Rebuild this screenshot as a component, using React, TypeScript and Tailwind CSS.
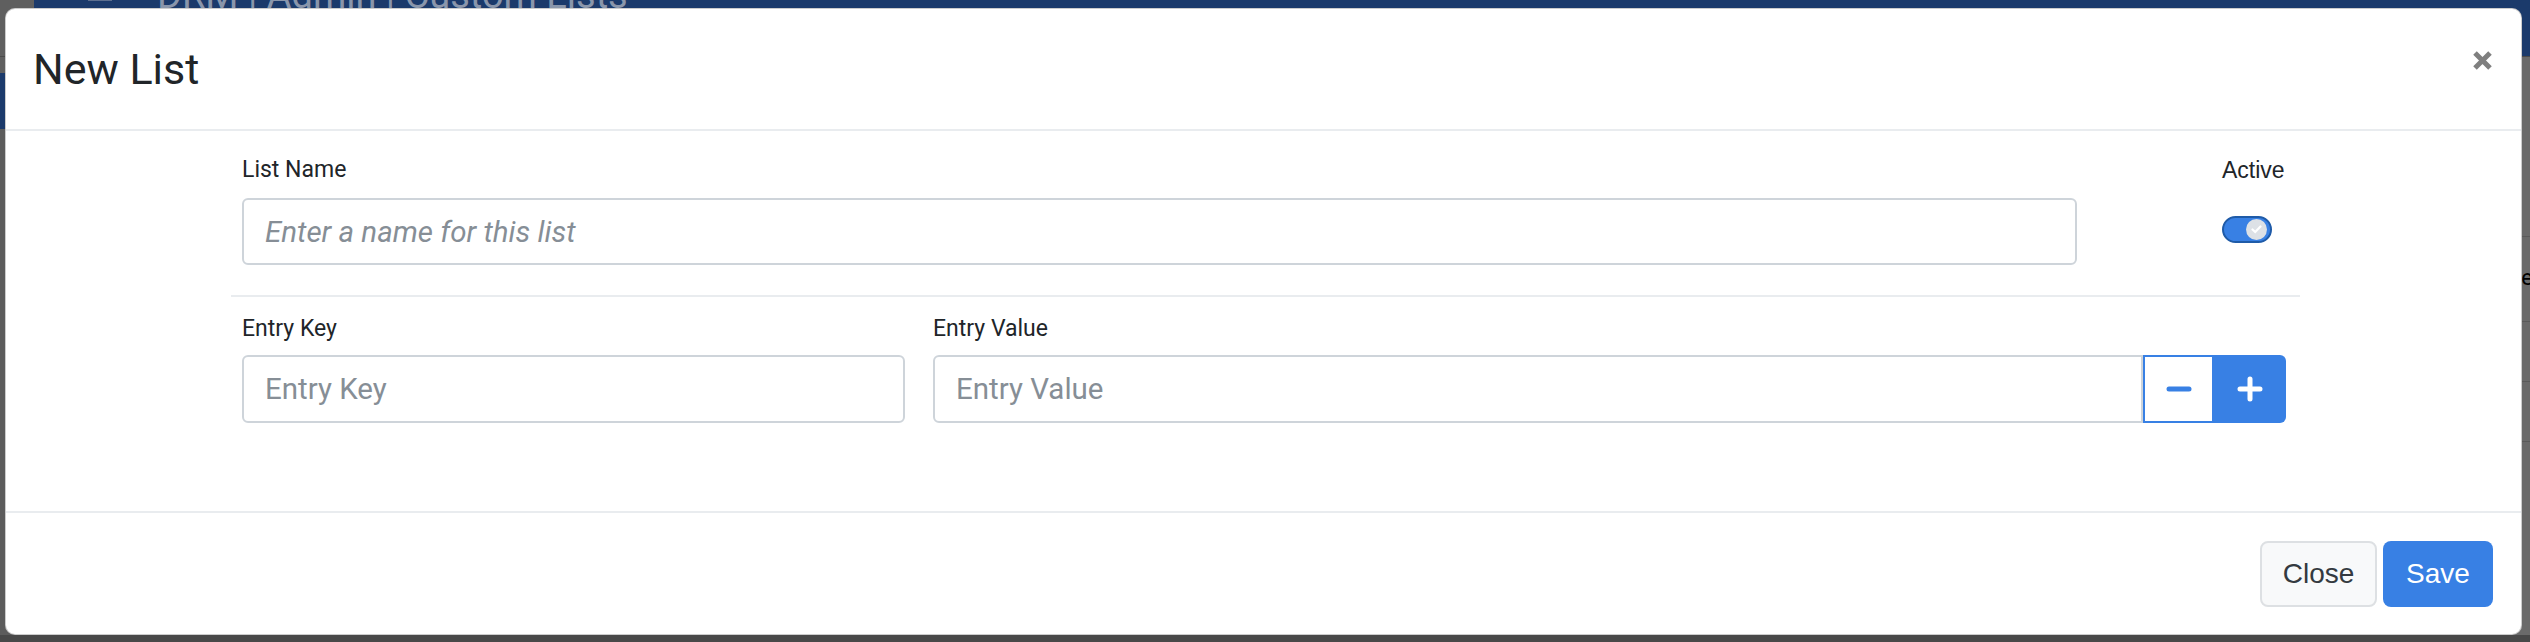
import { useState } from 'react';

const blue = 'bg-[#3880e4]';

export default function App() {
  const [active, setActive] = useState(true);
  const [entries] = useState([{ key: '', value: '' }]);

  return (
    <div className="relative w-[2530px] h-[642px] overflow-hidden bg-[#676767] font-['Roboto',sans-serif]">
      {/* page behind the backdrop */}
      <div className="flex flex-col h-full">
        <div className="flex h-[57px] border-b border-[#4a4a4a]">
          <div className="w-[34px] bg-[#5f5f5f]" />
          <div className="flex-1 flex items-start bg-[#1b3a6b]">
            <div className="ml-[54px] mt-[-10px] flex flex-col gap-[5px]">
              <div className="w-[24px] h-[3px] bg-[#5d6f8f]" />
              <div className="w-[24px] h-[3px] bg-[#5d6f8f]" />
            </div>
            <span className="ml-[45px] mt-[-24px] text-[38px] leading-none text-[#8a96ab] whitespace-nowrap">
              DRM | Admin | Custom Lists
            </span>
          </div>
        </div>
        <div className="flex flex-1">
          <div className="w-[34px] flex flex-col">
            <div className="h-[16px] bg-[#5f5f5f]" />
            <div className="h-[56px] bg-[#1b3a6b]" />
            <div className="flex-1 bg-[#5c5c5c]" />
          </div>
          <div className="flex-1 flex flex-col bg-[#6a6a6a]">
            <div className="h-[180px] border-b border-[#5a5a5a]" />
            <div className="h-[85px] flex justify-end items-start pt-[24px] text-[22px] text-black border-b border-[#5a5a5a]">
              <span className="mr-[-3px]">e</span>
            </div>
            <div className="h-[60px] border-b border-[#5a5a5a]" />
            <div className="h-[60px] border-b border-[#5a5a5a]" />
          </div>
        </div>
        <div className="h-[7px] bg-[#484848]" />
      </div>

      {/* modal */}
      <div className="absolute left-[5px] top-[8px] w-[2517px] h-[627px] flex flex-col bg-white rounded-[10px] border border-black/20">
        <div className="flex items-center justify-between h-[122px] pl-[27px] pr-[28px] border-b-2 border-[#e9ecef]">
          <h5 className="text-[43px] leading-none text-[#212529]">New List</h5>
          <button className="mb-[17px] w-[21px] h-[21px]">
            <svg width="21" height="21" viewBox="0 0 21 21">
              <path d="M3 3L18 18M18 3L3 18" stroke="#7f7f7f" strokeWidth="5" />
            </svg>
          </button>
        </div>

        <div className="flex-1 pt-[22px]">
          <div className="ml-[225px] w-[2069px]">
            <div className="flex pl-[11px] pr-[14px]">
              <div className="flex-1 flex flex-col">
                <label className="h-[34px] leading-[34px] mb-[11px] text-[23px] text-[#212529]">List Name</label>
                <input
                  placeholder="Enter a name for this list"
                  className="h-[67px] px-[21px] border-2 border-[#ced4da] rounded-[6px] text-[29.5px] outline-none placeholder:italic placeholder:text-[#868e96]"
                />
              </div>
              <div className="ml-[145px] w-[64px] flex flex-col">
                <label className="h-[34px] leading-[34px] text-[23px] text-[#212529] font-['Liberation_Sans',Arial,sans-serif] whitespace-nowrap">
                  Active
                </label>
                <button
                  onClick={() => setActive(!active)}
                  className={`mt-[29px] w-[50px] h-[27px] rounded-full border-2 border-[#1f5ba8] flex items-center pr-[3px] ${
                    active ? 'bg-[#3880e4] justify-end' : 'bg-white justify-start'
                  }`}
                >
                  <span className="w-[21px] h-[21px] rounded-full bg-[#dde1e6] flex items-center justify-center">
                    <svg width="11" height="9" viewBox="0 0 11 9">
                      <path d="M1.5 4.5L4.2 7L9.5 1.5" fill="none" stroke="white" strokeWidth="2.2" strokeLinecap="round" />
                    </svg>
                  </span>
                </button>
              </div>
            </div>

            <div className="mt-[30px] h-[2px] bg-[#e9ecef]" />

            {entries.map((entry, i) => (
              <div key={i} className="flex pl-[11px] pr-[14px] mt-[15px]">
                <div className="w-[663px] flex flex-col">
                  <label className="h-[34px] leading-[34px] mb-[9px] text-[23px] text-[#212529]">Entry Key</label>
                  <input
                    placeholder="Entry Key"
                    defaultValue={entry.key}
                    className="h-[68px] px-[21px] border-2 border-[#ced4da] rounded-[6px] text-[29.5px] outline-none placeholder:text-[#868e96]"
                  />
                </div>
                <div className="ml-[28px] flex-1 flex flex-col">
                  <label className="h-[34px] leading-[34px] mb-[9px] text-[23px] text-[#212529]">Entry Value</label>
                  <div className="flex h-[68px]">
                    <input
                      placeholder="Entry Value"
                      defaultValue={entry.value}
                      className="flex-1 min-w-0 px-[21px] border-2 border-[#ced4da] rounded-l-[6px] text-[29.5px] outline-none placeholder:text-[#868e96]"
                    />
                    <button className="w-[71px] border-2 border-[#3880e4] bg-white flex items-center justify-center">
                      <svg width="26" height="6" viewBox="0 0 26 6">
                        <path d="M3 3H23" stroke="#3880e4" strokeWidth="5" strokeLinecap="round" />
                      </svg>
                    </button>
                    <button className={`w-[72px] ${blue} rounded-r-[6px] flex items-center justify-center`}>
                      <svg width="26" height="26" viewBox="0 0 26 26">
                        <path d="M13 3V23M3 13H23" stroke="white" strokeWidth="5" strokeLinecap="round" />
                      </svg>
                    </button>
                  </div>
                </div>
              </div>
            ))}
          </div>
        </div>

        <div className="h-[123px] flex items-center justify-end gap-[6px] pr-[28px] border-t-2 border-[#e9ecef] font-['Liberation_Sans',Arial,sans-serif]">
          <button className="w-[117px] h-[66px] bg-[#f8f9fa] border-2 border-[#dde0e3] rounded-[8px] text-[28px] text-[#343a40]">
            Close
          </button>
          <button className={`w-[110px] h-[66px] ${blue} rounded-[8px] text-[28px] text-white`}>Save</button>
        </div>
      </div>
    </div>
  );
}
